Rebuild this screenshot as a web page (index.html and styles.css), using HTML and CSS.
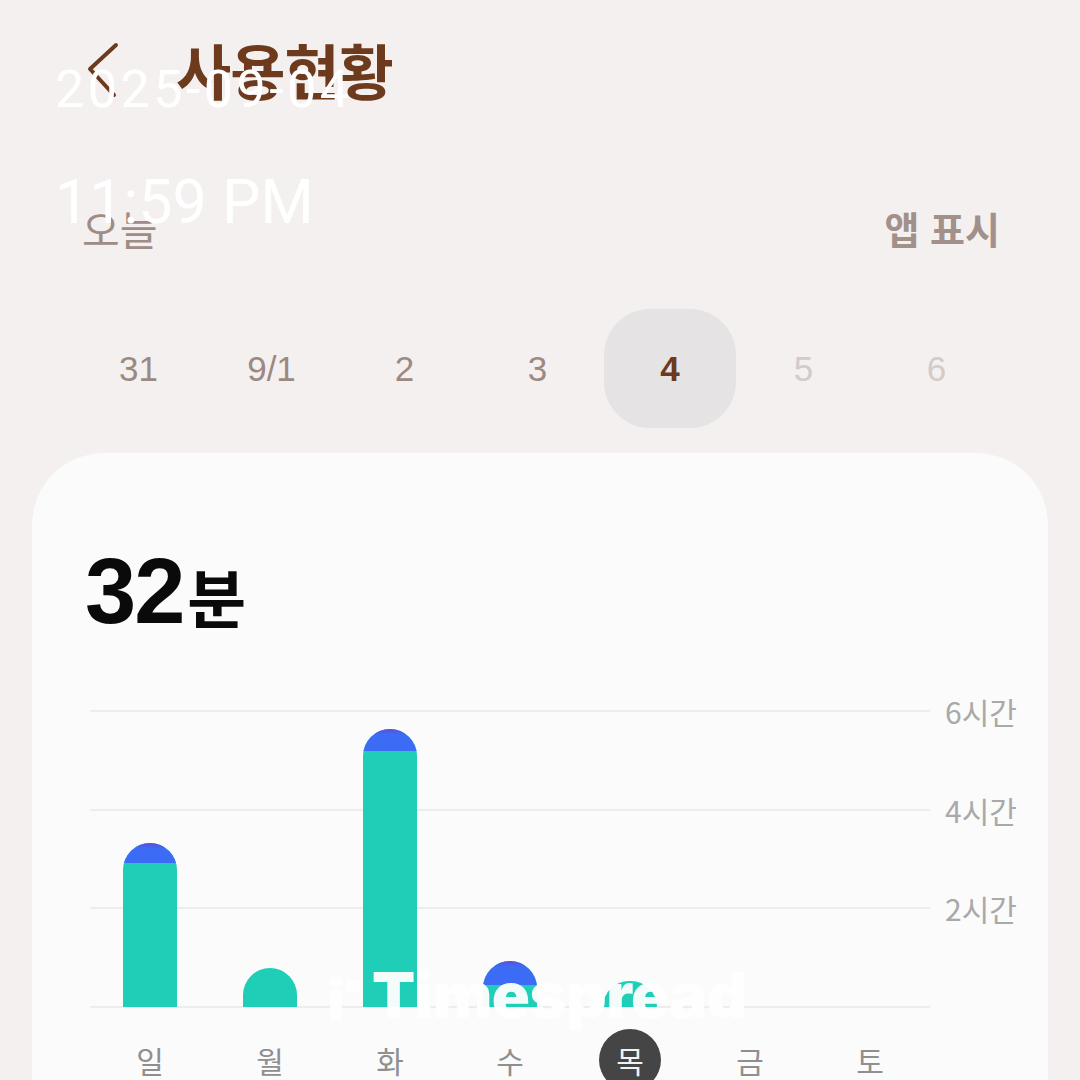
FILE: index.html
```html
<!DOCTYPE html>
<html lang="ko">
<head>
<meta charset="utf-8">
<link rel="stylesheet" href="styles.css">
</head>
<body>
<div class="screen">
  <header class="topbar">
    <svg class="back" width="40" height="60" viewBox="0 0 40 60"><polyline points="32,6 6,30 30,56" fill="none" stroke="#6d3a1d" stroke-width="4" stroke-linecap="round" stroke-linejoin="round"/></svg>
    <h1 class="title">사용현황</h1>
  </header>

  <div class="subbar">
    <span class="today">오늘</span>
    <span class="appshow">앱 표시</span>
  </div>

  <div class="dates">
    <span class="date past">31</span>
    <span class="date past">9/1</span>
    <span class="date past">2</span>
    <span class="date past">3</span>
    <span class="date current">4</span>
    <span class="date future">5</span>
    <span class="date future">6</span>
  </div>

  <section class="card">
    <div class="total"><span class="num">32</span><span class="unit">분</span></div>
    <div class="chart">
      <div class="grid">
        <div class="gline"><span class="glabel">6시간</span></div>
        <div class="gline"><span class="glabel">4시간</span></div>
        <div class="gline"><span class="glabel">2시간</span></div>
        <div class="gline base"></div>
      </div>
      <div class="bars">
        <div class="col"><div class="bar" style="height:164px"><div class="cap" style="height:20px"></div></div></div>
        <div class="col"><div class="bar" style="height:39px"></div></div>
        <div class="col"><div class="bar" style="height:278px"><div class="cap" style="height:22px"></div></div></div>
        <div class="col"><div class="bar" style="height:46px"><div class="cap" style="height:24px"></div></div></div>
        <div class="col"><div class="bar" style="height:26px"></div></div>
        <div class="col"></div>
        <div class="col"></div>
      </div>
    </div>
    <div class="days">
      <span class="day">일</span>
      <span class="day">월</span>
      <span class="day">화</span>
      <span class="day">수</span>
      <span class="day sel">목</span>
      <span class="day">금</span>
      <span class="day">토</span>
    </div>
  </section>

  <div class="stamp">
    <div class="stamp-date">2025-09-04</div>
    <div class="stamp-time">11:59 PM</div>
  </div>

  <div class="watermark">
    <svg class="wm-logo" width="34" height="44" viewBox="0 0 34 44"><rect x="2" y="14" width="12" height="30" rx="2" fill="#fff"/><circle cx="8" cy="6" r="6" fill="#fff"/><rect x="18" y="4" width="14" height="12" rx="2" fill="#fff"/></svg>
    <span class="wm-text">Timespread</span>
  </div>
</div>
</body>
</html>
```

FILE: styles.css
```css
* { box-sizing: border-box; margin: 0; padding: 0; }
html, body { width: 1080px; height: 1080px; overflow: hidden; }
body {
  background: #f4f0ef;
  font-family: "Noto Sans CJK KR", "Noto Sans", sans-serif;
}
.screen {
  position: relative;
  width: 1080px;
  height: 1080px;
  overflow: hidden;
}
.topbar {
  display: flex;
  align-items: center;
  height: 100px;
  padding: 38px 0 0 84px;
  gap: 52px;
}
.back { display: block; }
.title {
  font-size: 60px;
  font-weight: 700;
  color: #6d3a1d;
  letter-spacing: -1px;
  line-height: 1;
}
.subbar {
  display: flex;
  justify-content: space-between;
  align-items: center;
  padding: 96px 80px 0 82px;
  height: 160px;
}
.today {
  font-size: 41px;
  color: #9e8c85;
  line-height: 1;
}
.appshow {
  font-size: 38px;
  font-weight: 700;
  color: #a2918a;
  line-height: 1;
}
.dates {
  display: grid;
  grid-template-columns: repeat(7, 133px);
  padding: 49px 0 0 72px;
  height: 193px;
  align-content: start;
}
.date {
  height: 119px;
  display: flex;
  align-items: center;
  justify-content: center;
  font-family: "Liberation Sans", Arial, sans-serif;
  font-size: 35px;
  color: #9c8983;
}
.date.current {
  background: #e5e3e4;
  border-radius: 46px;
  color: #6d3a1d;
  font-weight: 700;
  width: 132px;
}
.date.future { color: #d2cbca; }

.card {
  margin: 0 32px;
  background: #fbfbfb;
  border-radius: 72px 72px 0 0;
  height: 700px;
  padding: 92px 0 0 0;
}
.total {
  padding-left: 53px;
  display: flex;
  align-items: baseline;
  height: 80px;
  line-height: 1;
  color: #0a0a0a;
}
.total .num {
  font-family: "Liberation Sans", Arial, sans-serif;
  font-size: 92px;
  font-weight: 700;
  letter-spacing: -2px;
}
.total .unit {
  font-size: 64px;
  font-weight: 700;
  margin-left: 4px;
}
.chart {
  display: grid;
  margin: 85px 0 0 58px;
  width: 990px;
}
.grid, .bars { grid-area: 1 / 1; }
.grid {
  display: flex;
  flex-direction: column;
}
.gline {
  height: 98.7px;
  width: 840px;
  border-top: 2px solid #ededed;
  position: relative;
}
.gline.base { height: 0; }
.glabel {
  position: absolute;
  left: 855px;
  top: -22px;
  font-size: 30px;
  color: #a9a9a9;
  white-space: nowrap;
  line-height: 1.4;
}
.bars {
  display: grid;
  grid-template-columns: repeat(7, 120px);
  align-items: end;
  height: 297px;
  position: relative;
  z-index: 2;
}
.col {
  display: flex;
  justify-content: center;
  align-items: flex-end;
  height: 100%;
}
.bar {
  width: 54px;
  background: #1fceb7;
  border-radius: 27px 27px 0 0;
  overflow: hidden;
}
.cap {
  background: linear-gradient(#5c4fd9 0, #3c6cf6 6px, #3c6cf6 100%);
}
.days {
  display: grid;
  grid-template-columns: repeat(7, 120px);
  margin-left: 58px;
  margin-top: 21px;
}
.day {
  justify-self: center;
  width: 62px;
  height: 62px;
  display: flex;
  align-items: center;
  justify-content: center;
  font-size: 30px;
  color: #8f8f8f;
}
.day.sel {
  background: #454545;
  color: #f2f2f2;
  border-radius: 50%;
}

.stamp {
  position: absolute;
  left: 55px;
  top: 64px;
  color: #ffffff;
  font-family: Roboto, "Liberation Sans", sans-serif;
  line-height: 1;
  z-index: 3;
}
.stamp-date { font-size: 52px; letter-spacing: 3.5px; }
.stamp-time { font-size: 61px; margin-top: 56px; }

.watermark {
  position: absolute;
  left: 328px;
  top: 970px;
  display: flex;
  align-items: flex-end;
  gap: 10px;
  opacity: 0.95;
  z-index: 3;
}
.wm-text {
  font-family: Inter, "Liberation Sans", sans-serif;
  font-weight: 900;
  font-size: 63px;
  color: #fff;
  line-height: 50px;
  letter-spacing: -0.5px;
}
```
